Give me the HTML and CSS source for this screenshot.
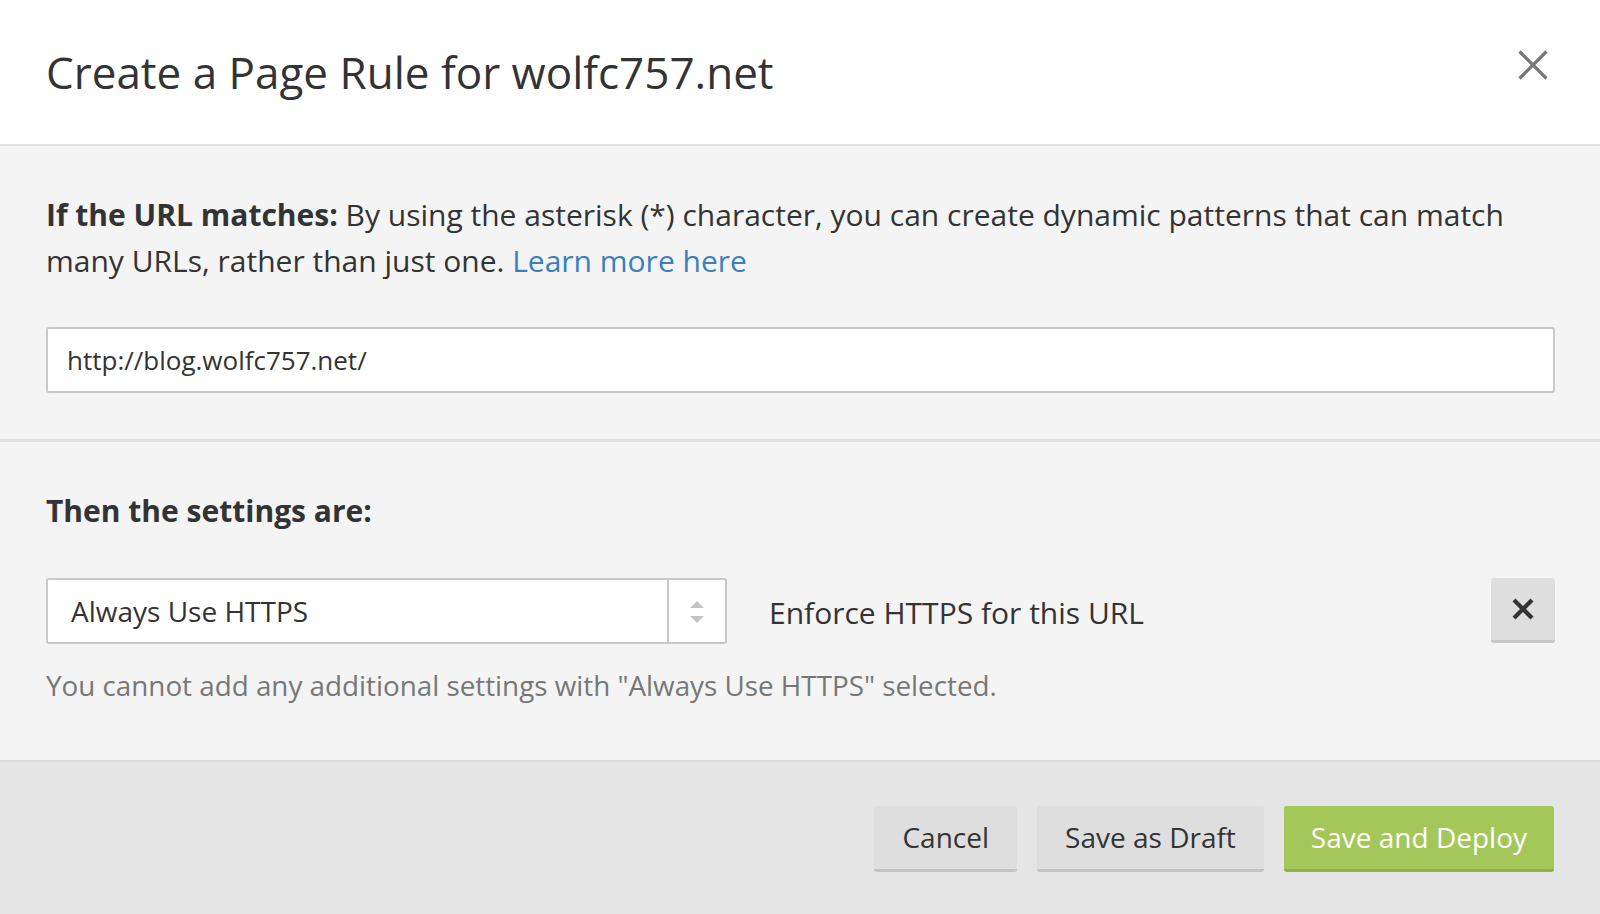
FILE: index.html
```html
<!DOCTYPE html>
<html lang="en">
<head>
<meta charset="utf-8">
<title>Create a Page Rule</title>
<link rel="stylesheet" href="styles.css">
</head>
<body>
<div class="modal">
  <header class="modal-header">
    <h1 class="modal-title">Create a Page Rule for wolfc757.net</h1>
    <button class="close-btn" aria-label="Close">
      <svg width="30" height="30" viewBox="0 0 30 30"><path d="M1.5 1.5 L28.5 28.5 M28.5 1.5 L1.5 28.5" stroke="#777" stroke-width="3.2" fill="none"/></svg>
    </button>
  </header>

  <section class="section section-url">
    <p class="desc"><strong>If the URL matches:</strong> By using the asterisk (*) character, you can create dynamic patterns that can match many URLs, rather than just one. <a href="#" class="link">Learn more here</a></p>
    <div class="text-input">http://blog.wolfc757.net/</div>
  </section>

  <section class="section section-settings">
    <h2 class="settings-title">Then the settings are:</h2>
    <div class="setting-row">
      <div class="select">
        <span class="select-value">Always Use HTTPS</span>
        <span class="select-arrows">
          <span class="arrow-up"></span>
          <span class="arrow-down"></span>
        </span>
      </div>
      <span class="setting-desc">Enforce HTTPS for this URL</span>
      <button class="remove-btn" aria-label="Remove">
        <svg width="22" height="22" viewBox="0 0 22 22"><path d="M2 2 L20 20 M20 2 L2 20" stroke="#333" stroke-width="4.2" fill="none"/></svg>
      </button>
    </div>
    <p class="help">You cannot add any additional settings with "Always Use HTTPS" selected.</p>
  </section>

  <footer class="modal-footer">
    <button class="btn btn-default">Cancel</button>
    <button class="btn btn-default">Save as Draft</button>
    <button class="btn btn-primary">Save and Deploy</button>
  </footer>
</div>
</body>
</html>
```

FILE: styles.css
```css
* { box-sizing: border-box; }

html, body {
  margin: 0;
  padding: 0;
  background: #ffffff;
}

body {
  font-family: "Open Sans", "Noto Sans", sans-serif;
  color: #333333;
}

.modal {
  width: 1600px;
  height: 914px;
  display: flex;
  flex-direction: column;
  overflow: hidden;
}

.modal-header {
  height: 146px;
  flex: 0 0 146px;
  display: flex;
  align-items: center;
  justify-content: space-between;
  padding: 0 52px 0 46px;
  border-bottom: 2px solid #e0e0e0;
  background: #ffffff;
}

.modal-title {
  margin: 0;
  font-size: 44px;
  font-weight: 400;
  line-height: 60px;
  color: #333333;
  padding-bottom: 1px;
}

.close-btn {
  border: 0;
  background: transparent;
  padding: 0;
  width: 30px;
  height: 30px;
  margin-bottom: 15px;
  display: flex;
}

.section {
  background: #f4f4f4;
  padding-left: 46px;
  padding-right: 45px;
}

.section-url {
  padding-top: 46px;
  padding-bottom: 46px;
  border-bottom: 3px solid #e0e0e0;
}

.desc {
  margin: 0;
  max-width: 1500px;
  font-size: 30px;
  line-height: 46px;
  color: #333333;
}

.desc strong {
  font-weight: 700;
}

.link {
  color: #3b7fc0;
  text-decoration: none;
}

.text-input {
  margin-top: 43px;
  height: 66px;
  background: #ffffff;
  border: 2px solid #c8c8c8;
  border-radius: 3px;
  padding: 0 19px;
  font-size: 26px;
  line-height: 62px;
  color: #333333;
}

.section-settings {
  padding-top: 49px;
  padding-bottom: 55px;
  flex: 0 0 auto;
}

.settings-title {
  margin: 0;
  font-size: 30px;
  font-weight: 700;
  line-height: 40px;
  color: #333333;
}

.setting-row {
  margin-top: 47px;
  display: flex;
  align-items: center;
}

.select {
  width: 681px;
  height: 66px;
  background: #ffffff;
  border: 2px solid #c8c8c8;
  border-radius: 3px;
  display: flex;
  align-items: center;
}

.select-value {
  flex: 1;
  padding-left: 23px;
  font-size: 28px;
  line-height: 62px;
  color: #333333;
}

.select-arrows {
  width: 58px;
  height: 62px;
  border-left: 2px solid #c8c8c8;
  display: flex;
  flex-direction: column;
  align-items: center;
  justify-content: center;
  gap: 8px;
  padding-top: 2px;
}

.arrow-up {
  width: 0;
  height: 0;
  border-left: 7px solid transparent;
  border-right: 7px solid transparent;
  border-bottom: 7px solid #c4c4c4;
}

.arrow-down {
  width: 0;
  height: 0;
  border-left: 7px solid transparent;
  border-right: 7px solid transparent;
  border-top: 7px solid #c4c4c4;
}

.setting-desc {
  flex: 1;
  margin-left: 42px;
  padding-top: 4px;
  font-size: 30px;
  line-height: 40px;
  color: #333333;
}

.remove-btn {
  width: 64px;
  height: 65px;
  border: 0;
  border-bottom: 3px solid #c8c8c8;
  border-radius: 3px;
  background: #dedede;
  padding: 0;
  display: flex;
  align-items: center;
  justify-content: center;
  margin-top: -2px;
}

.help {
  margin: 21px 0 0 0;
  font-size: 27.8px;
  line-height: 40px;
  color: #777777;
}

.modal-footer {
  flex: 1;
  background: #e5e5e5;
  border-top: 2px solid #dcdcdc;
  display: flex;
  justify-content: flex-end;
  align-items: flex-start;
  gap: 20px;
  padding: 44px 46px 0 0;
}

.btn {
  height: 66px;
  border: 0;
  border-bottom: 3px solid #c4c4c4;
  border-radius: 3px;
  font-family: "Open Sans", "Noto Sans", sans-serif;
  font-size: 28px;
  line-height: 63px;
  padding: 0 28px;
  cursor: pointer;
}

.btn-default {
  background: #dedede;
  color: #333333;
}

.btn-primary {
  background: #a5c75a;
  border-bottom-color: #8fb046;
  color: #ffffff;
  padding: 0 27px;
}
```
